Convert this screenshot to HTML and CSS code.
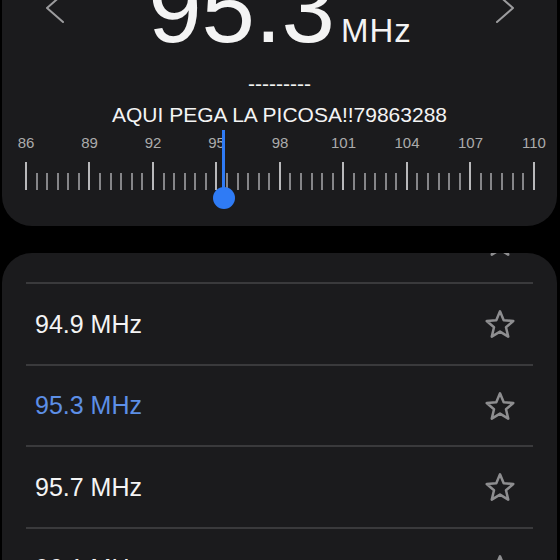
FILE: index.html
```html
<!DOCTYPE html>
<html lang="es">
<head>
    <meta charset="UTF-8">
    <meta name="viewport" content="width=device-width, initial-scale=1.0">
    <title>Radio FM</title>
    <link rel="stylesheet" href="styles.css">
</head>
<body>

<div class="tuner">
    <!-- Frecuencia actual -->
    <div class="freq-row">
        <svg class="chevron" viewBox="0 0 20 32"><polyline points="18,2 2,16 18,30"/></svg>
        <div class="freq">95.3<span class="unit">MHz</span></div>
        <svg class="chevron" viewBox="0 0 20 32"><polyline points="2,2 18,16 2,30"/></svg>
    </div>

    <div class="rds dashes">---------</div>
    <div class="rds">AQUI PEGA LA PICOSA!!79863288</div>

    <!-- Dial -->
    <div class="scale">
        <div class="labels">
            <span>86</span><span>89</span><span>92</span><span>95</span><span>98</span>
            <span>101</span><span>104</span><span>107</span><span>110</span>
        </div>
        <div class="ticks">
            <span class="tick major"></span><span class="tick"></span><span class="tick"></span><span class="tick"></span><span class="tick"></span><span class="tick"></span>
            <span class="tick major"></span><span class="tick"></span><span class="tick"></span><span class="tick"></span><span class="tick"></span><span class="tick"></span>
            <span class="tick major"></span><span class="tick"></span><span class="tick"></span><span class="tick"></span><span class="tick"></span><span class="tick"></span>
            <span class="tick major"></span><span class="tick"></span><span class="tick"></span><span class="tick"></span><span class="tick"></span><span class="tick"></span>
            <span class="tick major"></span><span class="tick"></span><span class="tick"></span><span class="tick"></span><span class="tick"></span><span class="tick"></span>
            <span class="tick major"></span><span class="tick"></span><span class="tick"></span><span class="tick"></span><span class="tick"></span><span class="tick"></span>
            <span class="tick major"></span><span class="tick"></span><span class="tick"></span><span class="tick"></span><span class="tick"></span><span class="tick"></span>
            <span class="tick major"></span><span class="tick"></span><span class="tick"></span><span class="tick"></span><span class="tick"></span><span class="tick"></span>
            <span class="tick major"></span>
            <!-- (95.3 - 86) / 24 -->
            <div class="needle" style="left: 38.75%"></div>
        </div>
    </div>
</div>

<!-- Lista de emisoras -->
<div class="stations-card">
    <div class="station-list">
        <div class="station">
            <span class="name">94.5 MHz</span>
            <svg class="star" viewBox="0 0 32 32"><polygon points="16,3.3 19.7,12.2 29.3,12.97 21.99,19.25 24.23,28.63 16,23.6 7.77,28.63 10.01,19.25 2.69,12.97 12.3,12.2"/></svg>
        </div>
        <div class="station">
            <span class="name">94.9 MHz</span>
            <svg class="star" viewBox="0 0 32 32"><polygon points="16,3.3 19.7,12.2 29.3,12.97 21.99,19.25 24.23,28.63 16,23.6 7.77,28.63 10.01,19.25 2.69,12.97 12.3,12.2"/></svg>
        </div>
        <div class="station active">
            <span class="name">95.3 MHz</span>
            <svg class="star" viewBox="0 0 32 32"><polygon points="16,3.3 19.7,12.2 29.3,12.97 21.99,19.25 24.23,28.63 16,23.6 7.77,28.63 10.01,19.25 2.69,12.97 12.3,12.2"/></svg>
        </div>
        <div class="station">
            <span class="name">95.7 MHz</span>
            <svg class="star" viewBox="0 0 32 32"><polygon points="16,3.3 19.7,12.2 29.3,12.97 21.99,19.25 24.23,28.63 16,23.6 7.77,28.63 10.01,19.25 2.69,12.97 12.3,12.2"/></svg>
        </div>
        <div class="station">
            <span class="name">96.1 MHz</span>
            <svg class="star" viewBox="0 0 32 32"><polygon points="16,3.3 19.7,12.2 29.3,12.97 21.99,19.25 24.23,28.63 16,23.6 7.77,28.63 10.01,19.25 2.69,12.97 12.3,12.2"/></svg>
        </div>
    </div>
</div>

</body>
</html>
```

FILE: styles.css
```css
body {
    margin: 0;
    background-color: #000;
    font-family: 'Liberation Sans', Arial, sans-serif;
    color: #f4f4f4;
    height: 560px;
    overflow: hidden;
}
.tuner {
    margin: 0 3px 0 2px;
    background-color: #1b1b1d;
    border-radius: 0 0 30px 30px;
    padding-bottom: 36px;
}
.freq-row {
    display: flex;
    align-items: center;
    justify-content: space-between;
    margin-top: -39px;
    padding: 0 42px 0 43px;
}
.chevron {
    width: 20px;
    height: 32px;
    margin-bottom: 3px;
    fill: none;
    stroke: #9c9c9e;
    stroke-width: 2;
    stroke-linecap: round;
    stroke-linejoin: round;
}
.freq {
    font-size: 96px;
    line-height: 1;
    white-space: nowrap;
}
.unit {
    font-size: 33px;
    letter-spacing: 1px;
    margin-left: 6px;
}
.rds {
    text-align: center;
    font-size: 21px;
    line-height: 1.2;
    margin-top: 6px;
}
.dashes {
    margin-top: 14px;
}
.scale {
    position: relative;
    padding: 0 22px 0 23px;
    margin-top: 7px;
}
.labels {
    display: flex;
    justify-content: space-between;
    margin: 0 -19px;
    font-size: 15px;
    line-height: 18px;
    color: #ababab;
}
.labels span {
    width: 40px;
    text-align: center;
}
.ticks {
    position: relative;
    display: flex;
    justify-content: space-between;
    align-items: flex-end;
    height: 28px;
    margin-top: 10px;
}
.tick {
    width: 2px;
    height: 17px;
    background-color: #858588;
}
.tick.major {
    height: 28px;
    background-color: #b8b8ba;
}
.needle {
    position: absolute;
    top: -32px;
    margin-left: -10px;
    width: 22px;
    height: 79px;
}
.needle::before {
    content: "";
    position: absolute;
    left: 9.5px;
    top: 0;
    width: 3px;
    height: 60px;
    background-color: #2f7bf5;
}
.needle::after {
    content: "";
    position: absolute;
    left: 0;
    bottom: 0;
    width: 22px;
    height: 22px;
    border-radius: 50%;
    background-color: #2f7bf5;
}
.stations-card {
    margin: 27px 3px 0 2px;
    background-color: #1b1b1d;
    border-radius: 30px 30px 0 0;
    height: 320px;
    overflow: hidden;
}
.station-list {
    margin-top: -52.5px;
}
.station {
    display: flex;
    align-items: center;
    justify-content: space-between;
    box-sizing: border-box;
    height: 81.5px;
    margin: 0 24px;
    padding: 0 17px 0 9px;
    font-size: 25px;
}
.station + .station {
    border-top: 2px solid #3a3a3c;
}
.station.active .name {
    color: #5d8fe6;
}
.star {
    width: 32px;
    height: 32px;
    fill: none;
    stroke: #8e8e90;
    stroke-width: 2.5;
    stroke-linejoin: round;
}
```
